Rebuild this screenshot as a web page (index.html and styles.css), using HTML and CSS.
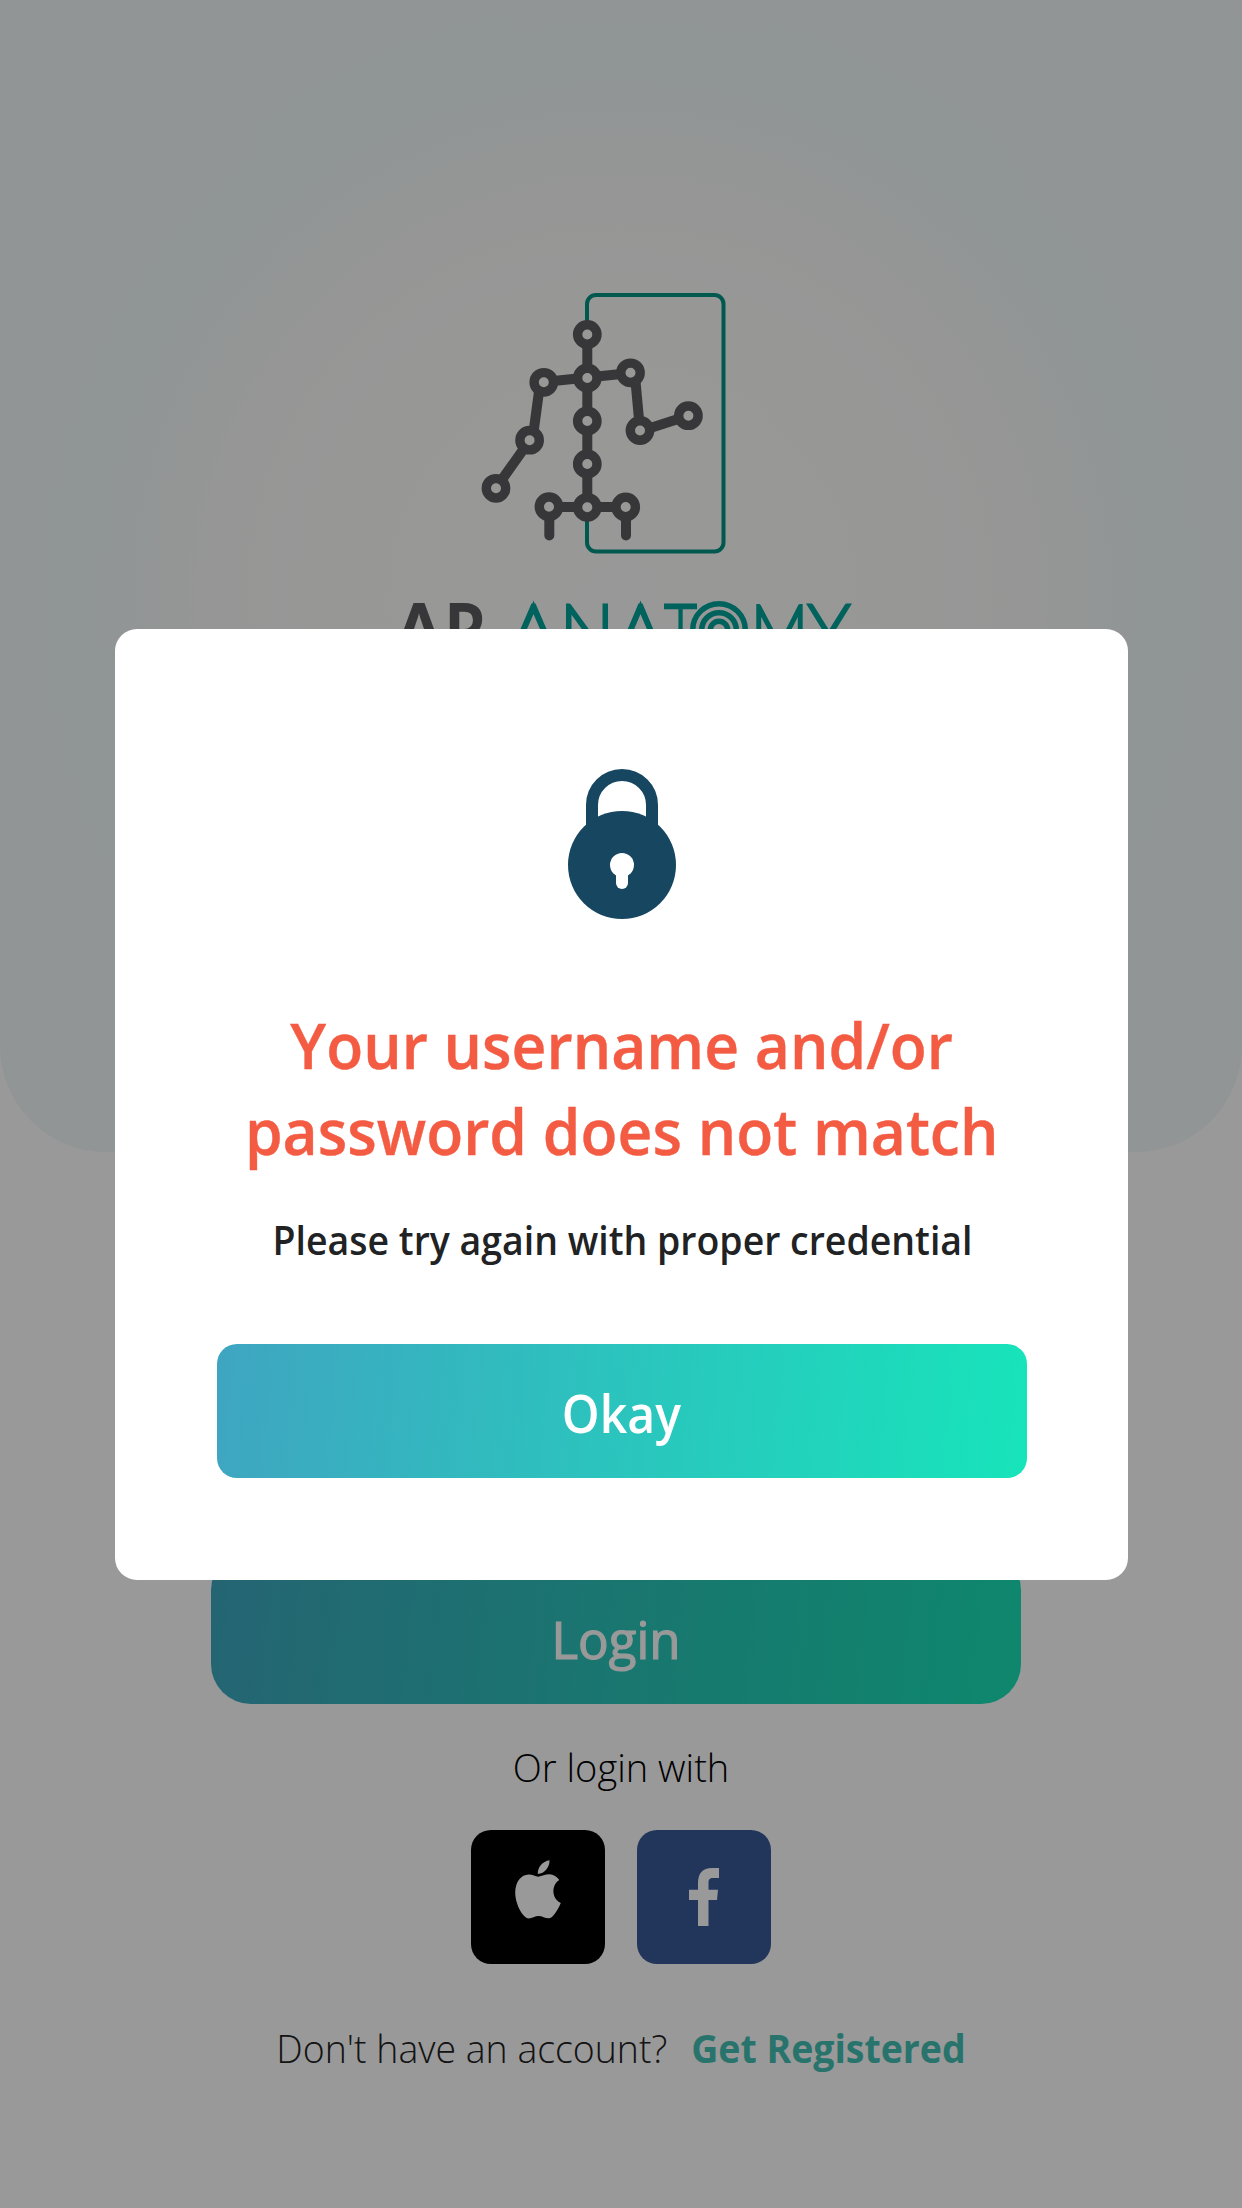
FILE: index.html
```html
<!DOCTYPE html>
<html lang="en">
<head>
<meta charset="utf-8">
<title>AR Anatomy - Login</title>
<link rel="stylesheet" href="styles.css">
</head>
<body>
<main class="screen">
  <header class="hero">
    <svg class="logo" viewBox="0 0 470 400" width="470" height="400" role="img" aria-label="AR Anatomy">
      <rect x="198" y="15" width="136.500" height="256.500" rx="9" fill="none" stroke="#009384" stroke-width="4"/>
      <g fill="none" stroke="#5d5d5f" stroke-width="10" stroke-linecap="round" stroke-linejoin="round">
        <path d="M198.300 54V227"/>
        <path d="M107 208L141 160"/>
        <path d="M144 156L151 104"/>
        <path d="M155 102L198 97.500L242 93"/>
        <path d="M246 96L251 150"/>
        <path d="M252 151L300 135.500"/>
        <path d="M160.300 255.500V227H237V255.500"/>
      </g>
      <g class="joints">
        <circle cx="198.300" cy="54.500" r="9.700"/><circle cx="198.300" cy="98" r="9.700"/>
        <circle cx="198.300" cy="141" r="9.700"/><circle cx="198.300" cy="184" r="9.700"/>
        <circle cx="198.300" cy="227.300" r="9.700"/><circle cx="154.800" cy="102.300" r="9.700"/>
        <circle cx="140.600" cy="160.200" r="9.700"/><circle cx="107" cy="208.300" r="9.700"/>
        <circle cx="241.500" cy="92.800" r="9.700"/><circle cx="251" cy="150.500" r="9.700"/>
        <circle cx="299.400" cy="135.700" r="9.700"/><circle cx="160" cy="226.700" r="9.700"/>
        <circle cx="236.700" cy="227" r="9.700"/>
      </g>
      <text class="mark-bold" y="377.500" x="5" textLength="50" lengthAdjust="spacingAndGlyphs">A</text>
      <text class="mark-bold" y="377.500" x="56" textLength="41" lengthAdjust="spacingAndGlyphs">R</text>
      <g class="mark-thin">
        <text y="377" x="120.500" textLength="48" lengthAdjust="spacingAndGlyphs">A</text>
        <text y="377" x="171" textLength="54" lengthAdjust="spacingAndGlyphs">N</text>
        <text y="377" x="228" textLength="47" lengthAdjust="spacingAndGlyphs">A</text>
        <text y="377" x="276" textLength="31" lengthAdjust="spacingAndGlyphs">T</text>
        <text y="377" x="362" textLength="57" lengthAdjust="spacingAndGlyphs">M</text>
        <text y="377" x="420" textLength="40" lengthAdjust="spacingAndGlyphs">Y</text>
      </g>
      <g fill="none" stroke="#00a499" stroke-width="5.500">
        <circle cx="330" cy="350" r="26.300"/><circle cx="330" cy="350" r="17.300"/><circle cx="330" cy="350" r="8.700"/>
      </g>
    </svg>
  </header>
  <button class="login"><span>Login</span></button>
  <p class="or"><span>Or login with</span></p>
  <div class="social">
    <button class="tile tile-apple" aria-label="Apple">
      <svg viewBox="0 0 134 134" width="134" height="134" fill="#fff">
        <path d="M78.500 30.300C79 36.500 73.500 44 66.800 44C66.400 37.500 71.500 31.300 78.500 30.300Z"/>
        <path d="M67.300 46.700C71 46 74 44.300 78.500 44.300C82.500 44.400 86 46.800 88.300 49.900C80.500 54.500 80 68 89.800 73C87.800 78 84.600 83.600 81 87C76.500 90.500 72.500 86 67.700 86C63 86 59.500 89.800 55.200 87.800C49 83.500 44.200 71.500 44.200 62.500C44.200 51.500 50.300 44.600 57.500 44.400C61.500 44.300 64.500 46.300 67.300 46.700Z"/>
      </svg>
    </button>
    <button class="tile tile-facebook" aria-label="Facebook">
      <svg viewBox="0 0 134 134" width="134" height="134" fill="#fff">
        <path d="M61 96V70H52V59.700H61V53C61 43.500 65.500 38 75 38H82V48H76C72.500 48 71.500 49.500 71.500 53V59.700H81L80 70H71.500V96Z"/>
      </svg>
    </button>
  </div>
  <p class="register"><span class="ask">Don't have an account?</span><a class="link">Get Registered</a></p>
</main>

<div class="overlay">
  <section class="dialog" role="alertdialog">
    <svg class="lock" viewBox="0 0 108 150" width="108" height="150">
      <path d="M24 70V36A30 30 0 0 1 84 36V70" fill="none" stroke="#164660" stroke-width="12"/>
      <circle cx="54" cy="96" r="54" fill="#164660"/>
      <circle cx="54" cy="96" r="12" fill="#fff"/>
      <path d="M54 96V114" stroke="#fff" stroke-width="12" stroke-linecap="round"/>
    </svg>
    <h1 class="title">Your username and/or<br>password does not match</h1>
    <p class="hint">Please try again with proper credential</p>
    <button class="okay"><span>Okay</span></button>
  </section>
</div>
</body>
</html>
```
FILE: styles.css
```css
* { box-sizing: border-box; margin: 0; padding: 0; }
body {
  width: 1242px;
  height: 2208px;
  overflow: hidden;
  position: relative;
  background: #fff;
  font-family: "Open Sans", "Noto Sans", sans-serif;
}
button { border: 0; font-family: inherit; white-space: nowrap; }
button span { display: inline-block; }
.screen { height: 2208px; display: flex; flex-direction: column; align-items: center; }
.hero {
  width: 100%;
  height: 1152px;
  padding: 280px 0 0 389px;
  border-radius: 0 0 106px 106px;
  background: radial-gradient(circle at 621px 600px, #fefefd 0, #fcfdfb 300px, #f8faf8 420px, #f1f9f9 520px, #f2f9f9 100%);
}
.logo { display: block; overflow: visible; }
.joints { fill: #fefefc; stroke: #5d5d5f; stroke-width: 9.4px; }
.mark-bold { font: 900 77px Lato, sans-serif; fill: #5d5d5f; }
.mark-thin { font: 100 73px Lato, sans-serif; fill: #00a499; stroke: #00a499; stroke-width: 4.8px; stroke-linejoin: miter; }
.login {
  width: 810px;
  height: 154px;
  margin: 398px 10px 0 0;
  padding-top: 23px;
  border-radius: 40px;
  background: linear-gradient(96deg, #3ea8c0, #18e2b6);
  color: #fff;
  font-size: 51px;
  font-weight: 400;
  -webkit-text-stroke: 1.2px #fff;
}
.or { margin-top: 35px; line-height: 56px; font-size: 39px; font-weight: 300; color: #000; transform: scaleX(.975); }
.social { display: flex; gap: 32px; margin-top: 35px; }
.tile { width: 134px; height: 134px; border-radius: 20px; overflow: hidden; }
.tile svg { display: block; }
.tile-apple { background: #000; }
.tile-facebook { background: #3a5998; }
.register { display: flex; margin-top: 56px; line-height: 56px; font-size: 39px; white-space: nowrap; transform: scaleX(.96); }
.ask { font-weight: 300; color: #222; margin-right: 25px; }
.link { font-weight: 700; color: #43c2b5; }
.overlay {
  position: absolute;
  inset: 0;
  display: flex;
  flex-direction: column;
  align-items: center;
  padding-top: 629px;
  background: rgba(0, 0, 0, .4);
}
.dialog {
  width: 1013px;
  height: 951px;
  margin-left: 1px;
  padding-top: 140px;
  border-radius: 22px;
  background: #fff;
  display: flex;
  flex-direction: column;
  align-items: center;
}
.lock { display: block; }
.title { margin-top: 83px; text-align: center; font-size: 63px; line-height: 86px; font-weight: 600; color: #f45b43; -webkit-text-stroke: .4px #f45b43; white-space: nowrap; transform: scaleX(.962); }
.hint { margin-top: 38px; line-height: 56px; font-size: 39px; font-weight: 600; color: #212224; white-space: nowrap; transform: translateX(1px) scaleX(.96); }
.okay {
  width: 810px;
  height: 134px;
  margin-top: 76px;
  padding-top: 3px;
  border-radius: 20px;
  background: linear-gradient(96deg, #3fa5c1, #17e4ba);
  color: #fff;
  font-size: 52px;
  font-weight: 600;
}
.okay span { transform: scaleX(.925); }
```
